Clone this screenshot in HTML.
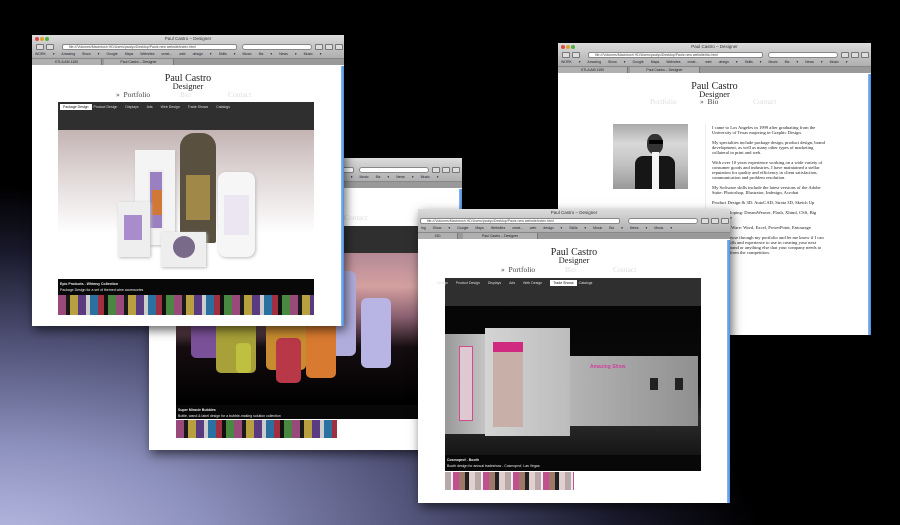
<!DOCTYPE html>
<html><head><meta charset="utf-8"><style>
*{margin:0;padding:0;box-sizing:border-box}
body{width:900px;height:525px;overflow:hidden;position:relative;font-family:"Liberation Serif",serif;
background:radial-gradient(ellipse 760px 360px at 0px 545px,#b8bce4 0%,#8c90bc 28%,#52547a 55%,#18182a 82%,#000 100%),#000;}
.w{position:absolute;background:#fff;box-shadow:2px 4px 10px rgba(0,0,0,.6);overflow:hidden}
.ch{position:absolute;left:0;top:0;right:0;height:30px;background:linear-gradient(#dcdcdc,#b8b8b8 60%,#a4a4a4)}
.tt{position:absolute;top:1px;left:0;right:0;text-align:center;font:4.5px "Liberation Sans",sans-serif;color:#333}
.dot{position:absolute;top:2px;width:4px;height:4px;border-radius:50%}
.url{position:absolute;top:9px;left:30px;width:175px;height:6px;background:#fff;border:1px solid #888;border-radius:2px;font:3.5px "Liberation Sans",sans-serif;color:#444;padding-left:6px;line-height:4px}
.srch{position:absolute;top:9px;left:210px;width:70px;height:6px;background:#fff;border:1px solid #888;border-radius:3px}
.btn{position:absolute;top:9px;width:8px;height:6px;background:#ddd;border:1px solid #777;border-radius:1px}
.bm{position:absolute;top:17px;left:3px;right:3px;height:5px;font:3.5px "Liberation Sans",sans-serif;color:#223;white-space:nowrap;word-spacing:6px}
.tabs{position:absolute;top:23px;left:0;right:0;height:7px;background:#999;border-top:1px solid #888}
.tab{position:absolute;top:0;height:6px;background:#b0b0b0;border-right:1px solid #777;font:3.5px "Liberation Sans",sans-serif;color:#222;text-align:center;line-height:6px}
.sb{position:absolute;right:0;top:31px;bottom:0;width:3px;background:linear-gradient(90deg,#8ab8ee,#4a8ee0)}
.h1{position:absolute;left:0;right:0;text-align:center;font-size:10px;line-height:9px;color:#222}
.h2{position:absolute;left:0;right:0;text-align:center;font-size:8.5px;line-height:8px;color:#222}
.nav{position:absolute;font-size:7.5px;color:#444}
.nav.l{color:#ddd}
.pt{position:absolute;top:3px;font:3.5px "Liberation Sans",sans-serif;color:#ddd;white-space:nowrap}
.pt b{background:#fff;color:#111;padding:1px 3px;font-weight:normal}
.pt span{margin-right:8px}
.img{position:absolute;left:0;right:0;overflow:hidden}
.cap{position:absolute;left:0;right:0;background:#080808;font:bold 3.5px "Liberation Sans",sans-serif;color:#eee;padding:3px 2px}
.cap i{display:block;font-style:normal;font-weight:normal;margin-top:2px}
.th{position:absolute;left:0;background:repeating-linear-gradient(90deg,#9a4a7a 0 8px,#1a1a1a 8px 12px,#b8a040 12px 20px,#5a3a80 20px 28px,#ccc 28px 32px,#2a70a0 32px 40px,#a03040 40px 46px,#111 46px 50px,#488840 50px 58px)}
.bio{position:absolute;font-size:4.6px;line-height:5px;color:#222}
.bio p{margin-bottom:5px}
</style></head><body>

<div class="w" style="left:558px;top:43px;width:313px;height:292px">
 <div class="ch"><div class="dot" style="left:3px;background:#e04848"></div><div class="dot" style="left:8px;background:#e0a030"></div><div class="dot" style="left:13px;background:#50b040"></div>
 <div class="tt">Paul Castro – Designer</div><div class="btn" style="left:4px"></div><div class="btn" style="left:14px"></div><div class="url">file:///Volumes/Macintosh HD/Users/paulyc/Desktop/Pauls new website/bio.html</div><div class="srch"></div><div class="btn" style="left:283px"></div><div class="btn" style="left:293px"></div><div class="btn" style="left:303px"></div>
 <div class="bm">WORK ▾ Amazing Show ▾ Google Maps Websites creat... web design ▾ Skills ▾ Music Biz ▾ News ▾ Music ▾</div>
 <div class="tabs"><div class="tab" style="left:0;width:70px">KTLA AM 1150</div><div class="tab" style="left:72px;width:70px">Paul Castro – Designer</div></div></div>
 <div class="sb"></div>
 <div class="h1" style="top:39px">Paul Castro</div><div class="h2" style="top:47px">Designer</div>
 <div class="nav l" style="left:92px;top:54px">Portfolio</div><div class="nav" style="left:142px;top:54px">» &nbsp;Bio</div><div class="nav l" style="left:195px;top:54px">Contact</div>
 <div style="position:absolute;left:55px;top:81px;width:75px;height:65px;background:linear-gradient(180deg,#aaa 0,#d8d8d8 30%,#c4c4c4 60%,#999);overflow:hidden">
  <div style="position:absolute;left:34px;top:10px;width:16px;height:20px;border-radius:45%;background:#333"></div>
  <div style="position:absolute;left:36px;top:16px;width:14px;height:4px;background:#000"></div>
  <div style="position:absolute;left:22px;top:32px;width:40px;height:33px;background:#161616;border-radius:8px 8px 0 0"></div>
  <div style="position:absolute;left:39px;top:28px;width:7px;height:37px;background:#f4f4f4"></div></div>
 <div style="position:absolute;left:147px;top:81px;width:1px;height:120px;background:#eee"></div>
 <div class="bio" style="left:154px;top:82px;width:115px">
 <p>I came to Los Angeles in 1999 after graduating from the University of Texas majoring in Graphic Design.</p>
 <p>My specialties include package design, product design, brand development, as well as many other types of marketing collateral in print and web.</p>
 <p>With over 10 years experience working on a wide variety of consumer goods and industries, I have maintained a stellar reputation for quality and efficiency in client satisfaction, communication and problem resolution.</p>
 <p>My Software skills include the latest versions of the Adobe Suite: Photoshop, Illustrator, Indesign, Acrobat</p>
 <p>Product Design &amp; 3D: AutoCAD, Strata 3D, Sketch Up</p>
 <p>Web developing: DreamWeaver, Flash, Xhtml, CSS, Big Commerce</p>
 <p>Microsoft Ware: Word, Excel, PowerPoint, Entourage</p>
 <p>Please browse through my portfolio and let me know if I can use my skills and experience to use in creating your next product, brand or anything else that your company needs to stand out from the competition.</p></div>
</div>

<div class="w" style="left:149px;top:158px;width:313px;height:292px">
 <div class="ch"><div class="tt">Paul Castro – Designer</div><div class="url">file:///Volumes/Macintosh HD/Users/paulyc/Desktop/Pauls new website/index.html</div><div class="srch"></div><div class="btn" style="left:283px"></div><div class="btn" style="left:293px"></div><div class="btn" style="left:303px"></div>
 <div class="bm">WORK ▾ Amazing Show ▾ Google Maps Websites creat... web design ▾ Skills ▾ Music Biz ▾ News ▾ Music ▾</div>
 <div class="tabs"></div></div>
 <div class="sb"></div>
 <div class="h1" style="top:39px">Paul Castro</div><div class="h2" style="top:47px">Designer</div>
 <div class="nav l" style="left:195px;top:55px">Contact</div>
 <div style="position:absolute;left:27px;top:68px;width:255px;height:212px">
  <div style="position:absolute;left:0;top:0;width:255px;height:27px;background:#2f2f2f"></div>
  <div class="img" style="top:27px;height:152px;background:linear-gradient(180deg,#b48a96 0,#d4a0a0 22%,#8a6070 42%,#150d10 62%,#000 100%)">
   <div style="position:absolute;left:145px;top:18px;width:35px;height:85px;background:#b0acdc;border-radius:6px"></div>
   <div style="position:absolute;left:185px;top:45px;width:30px;height:70px;background:#b8b4e4;border-radius:6px"></div>
   <div style="position:absolute;left:15px;top:60px;width:40px;height:45px;background:#7a5098;border-radius:5px"></div>
   <div style="position:absolute;left:40px;top:65px;width:40px;height:55px;background:#a8a038;border-radius:5px"></div>
   <div style="position:absolute;left:90px;top:62px;width:40px;height:55px;background:#c88c30;border-radius:5px"></div>
   <div style="position:absolute;left:100px;top:85px;width:25px;height:45px;background:#b83848;border-radius:5px"></div>
   <div style="position:absolute;left:130px;top:70px;width:30px;height:55px;background:#d87a30;border-radius:5px"></div>
   <div style="position:absolute;left:60px;top:90px;width:15px;height:30px;background:#c0c040;border-radius:4px"></div>
  </div>
  <div class="cap" style="top:179px;height:14px">Super Miracle Bubbles<i>Bottle, wand &amp; label design for a bubble-making solution collection</i></div>
  <div class="th" style="top:194px;width:161px;height:18px"></div>
 </div>
</div>

<div class="w" style="left:32px;top:35px;width:312px;height:291px">
 <div class="ch"><div class="dot" style="left:3px;background:#e04848"></div><div class="dot" style="left:8px;background:#e0a030"></div><div class="dot" style="left:13px;background:#50b040"></div>
 <div class="tt">Paul Castro – Designer</div><div class="btn" style="left:4px"></div><div class="btn" style="left:14px"></div><div class="url">file:///Volumes/Macintosh HD/Users/paulyc/Desktop/Pauls new website/index.html</div><div class="srch"></div><div class="btn" style="left:283px"></div><div class="btn" style="left:293px"></div><div class="btn" style="left:303px"></div>
 <div class="bm">WORK ▾ Amazing Show ▾ Google Maps Websites creat... web design ▾ Skills ▾ Music Biz ▾ News ▾ Music ▾</div>
 <div class="tabs"><div class="tab" style="left:0;width:70px">KTLA AM 1150</div><div class="tab" style="left:72px;width:70px">Paul Castro – Designer</div></div></div>
 <div class="sb"></div>
 <div class="h1" style="top:39px">Paul Castro</div><div class="h2" style="top:47px">Designer</div>
 <div class="nav" style="left:84px;top:55px">» &nbsp;Portfolio</div><div class="nav l" style="left:148px;top:55px">Bio</div><div class="nav l" style="left:196px;top:55px">Contact</div>
 <div style="position:absolute;left:26px;top:67px;width:256px;height:213px">
  <div style="position:absolute;left:0;top:0;width:256px;height:28px;background:#2f2f2f"><div class="pt" style="left:2px"><b>Package Design</b>&nbsp; <span>Product Design</span><span>Displays</span><span>Ads</span><span>Web Design</span><span>Trade Shows</span><span>Catalogs</span></div></div>
  <div class="img" style="top:28px;height:149px;background:linear-gradient(180deg,#c4b4b4 0,#e4dcdc 35%,#fff 70%)">
   <div style="position:absolute;left:77px;top:20px;width:40px;height:95px;background:#f4f4f4;box-shadow:1px 1px 3px #bbb"></div>
   <div style="position:absolute;left:90px;top:40px;width:16px;height:60px;background:#9a80c0;border:2px solid #eee"></div>
   <div style="position:absolute;left:94px;top:60px;width:10px;height:25px;background:#d07838"></div>
   <div style="position:absolute;left:122px;top:3px;width:36px;height:110px;background:#5a5040;border-radius:14px 14px 2px 2px"></div>
   <div style="position:absolute;left:128px;top:45px;width:24px;height:45px;background:#a08848"></div>
   <div style="position:absolute;left:160px;top:42px;width:37px;height:85px;background:#f6f6f6;border-radius:8px;box-shadow:1px 1px 3px #bbb"></div>
   <div style="position:absolute;left:166px;top:65px;width:25px;height:40px;background:#ece6f2"></div>
   <div style="position:absolute;left:60px;top:72px;width:32px;height:55px;background:#eee;box-shadow:1px 1px 3px #bbb"></div>
   <div style="position:absolute;left:66px;top:85px;width:18px;height:25px;background:#a88ccc"></div>
   <div style="position:absolute;left:103px;top:102px;width:45px;height:35px;background:#eee;box-shadow:1px 1px 3px #bbb"></div>
   <div style="position:absolute;left:115px;top:106px;width:22px;height:22px;border-radius:50%;background:#7a6a8a"></div>
  </div>
  <div class="cap" style="top:177px;height:16px">Epic Products - Whimsy Collection<i>Package Design for a set of themed wine accessories</i></div>
  <div class="th" style="top:193px;width:256px;height:20px"></div>
 </div>
</div>

<div class="w" style="left:418px;top:209px;width:312px;height:294px">
 <div class="ch"><div class="tt">Paul Castro – Designer</div><div class="url" style="left:2px;width:200px">file:///Volumes/Macintosh HD/Users/paulyc/Desktop/Pauls new website/index.html</div><div class="srch"></div><div class="btn" style="left:283px"></div><div class="btn" style="left:293px"></div><div class="btn" style="left:303px"></div>
 <div class="bm">ing Show ▾ Google Maps Websites creat... web design ▾ Skills ▾ Music Biz ▾ News ▾ Music ▾</div>
 <div class="tabs"><div class="tab" style="left:0;width:40px">150</div><div class="tab" style="left:45px;width:75px">Paul Castro – Designer</div></div></div>
 <div class="sb"></div>
 <div class="h1" style="top:39px">Paul Castro</div><div class="h2" style="top:47px">Designer</div>
 <div class="nav" style="left:83px;top:56px">» &nbsp;Portfolio</div><div class="nav l" style="left:147px;top:56px">Bio</div><div class="nav l" style="left:195px;top:56px">Contact</div>
 <div style="position:absolute;left:27px;top:69px;width:256px;height:212px">
  <div style="position:absolute;left:0;top:0;width:256px;height:28px;background:#2f2f2f"><div class="pt" style="left:-8px"><span>Design</span><span>Product Design</span><span>Displays</span><span>Ads</span><span>Web Design</span><b>Trade Shows</b>&nbsp; <span>Catalogs</span></div></div>
  <div class="img" style="top:28px;height:149px;background:linear-gradient(180deg,#050505 0,#0a0a0a 55%,#2c2c2c 75%,#151515)">
   <div style="position:absolute;left:0;top:28px;width:40px;height:100px;background:linear-gradient(90deg,#999,#c4c4c4)"></div>
   <div style="position:absolute;left:40px;top:22px;width:85px;height:108px;background:linear-gradient(90deg,#d4d4d4,#bcbcbc)"></div>
   <div style="position:absolute;left:125px;top:50px;width:128px;height:70px;background:linear-gradient(90deg,#b4b4b4,#909090)"></div>
   <div style="position:absolute;left:14px;top:40px;width:14px;height:75px;background:#e0c8d0;border:1px solid #d04c90"></div>
   <div style="position:absolute;left:48px;top:36px;width:30px;height:85px;background:#c8b0a8;border-top:10px solid #d02a80"></div>
   <div style="position:absolute;left:145px;top:58px;width:50px;height:8px;color:#d040a0;font:bold 5px 'Liberation Sans',sans-serif">Amazing Show</div>
   <div style="position:absolute;left:205px;top:72px;width:8px;height:12px;background:#222"></div>
   <div style="position:absolute;left:230px;top:72px;width:8px;height:12px;background:#222"></div>
  </div>
  <div class="cap" style="top:177px;height:16px">Cosmoprof - Booth<i>Booth design for annual tradeshow - Cosmoprof, Las Vegas</i></div>
  <div class="th" style="top:194px;width:129px;height:18px;background:repeating-linear-gradient(90deg,#b8a8a8 0 6px,#eee 6px 8px,#c05090 8px 14px,#a07868 14px 20px,#222 20px 24px,#e0d0d0 24px 30px)"></div>
 </div>
</div>
</body></html>
